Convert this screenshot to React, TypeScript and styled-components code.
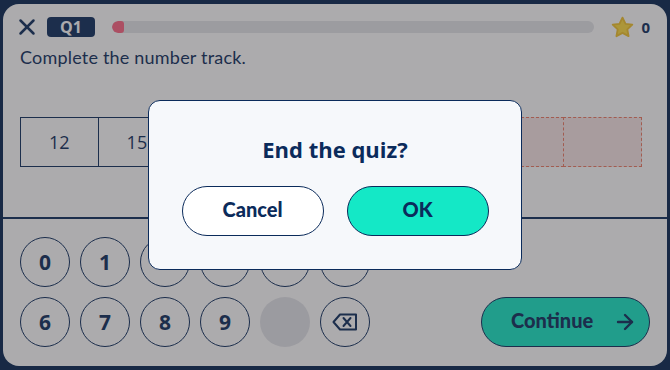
import React from "react";
import styled, { createGlobalStyle } from "styled-components";
import { X, ArrowRight } from "lucide-react";

const navy = "#0b2b5b";

const GlobalStyle = createGlobalStyle`
  html, body {
    margin: 0;
    padding: 0;
    width: 670px;
    height: 370px;
    overflow: hidden;
    background: #04234f;
  }
  * {
    box-sizing: border-box;
  }
`;

const Screen = styled.div`
  width: 670px;
  height: 370px;
  padding: 4px 3px;
  font-family: "Open Sans", "Noto Sans", sans-serif;
  color: ${navy};
`;

const Panel = styled.div`
  height: 362px;
  background: #ffffff;
  border-radius: 16px;
  display: flex;
  flex-direction: column;
  overflow: hidden;
`;

// top part
const Top = styled.div`
  height: 215px;
  padding: 13px 17px 0 17px;
  display: flex;
  flex-direction: column;
`;

const Header = styled.div`
  display: flex;
  align-items: center;
  height: 20px;
`;

const CloseBtn = styled.div`
  display: flex;
  align-items: center;
  justify-content: center;
  margin-left: -6px;
  margin-right: 7px;
  svg {
    flex-shrink: 0;
  }
`;

const Badge = styled.div`
  width: 48px;
  height: 20px;
  border-radius: 4px;
  background: ${navy};
  color: #ffffff;
  font-weight: 700;
  font-size: 16px;
  display: flex;
  align-items: center;
  justify-content: center;
  margin-right: 17px;
`;

const Track = styled.div`
  flex: 1;
  height: 12px;
  border-radius: 6px;
  background: #e4e5e9;
  overflow: hidden;
`;

const Fill = styled.div`
  height: 100%;
  background: #ff6482;
  border-radius: 6px 3px 3px 6px;
`;

const Score = styled.div`
  display: flex;
  align-items: center;
  margin-left: 16px;
  gap: 6px;
  font-weight: 700;
  font-size: 15px;
`;

const Prompt = styled.div`
  margin-top: 9px;
  font-family: "Lato", sans-serif;
  font-size: 18px;
  line-height: 22px;
  letter-spacing: 0.2px;
`;

const NumberTrack = styled.div`
  margin-top: 49px;
  display: flex;
`;

const Cell = styled.div<{ $empty?: boolean }>`
  width: 78.6px;
  height: 50px;
  display: flex;
  align-items: center;
  justify-content: center;
  font-size: 18px;
  background: ${(p) => (p.$empty ? "#f8e6e6" : "transparent")};
  border: 1px ${(p) => (p.$empty ? "dashed #ee7a62" : `solid ${navy}`)};
  & + & {
    margin-left: -1px;
  }
`;

// keypad
const Bottom = styled.div`
  flex: 1;
  border-top: 2px solid ${navy};
  padding: 18px 17px 19px 17px;
  display: flex;
  justify-content: space-between;
  align-items: flex-end;
`;

const Keypad = styled.div`
  display: grid;
  grid-template-columns: repeat(6, 50px);
  gap: 10px;
`;

const Key = styled.div<{ $blank?: boolean }>`
  width: 50px;
  height: 50px;
  border-radius: 50%;
  border: ${(p) => (p.$blank ? "none" : `1.5px solid ${navy}`)};
  background: ${(p) => (p.$blank ? "#e3e4e9" : "transparent")};
  display: flex;
  align-items: center;
  justify-content: center;
  font-weight: 700;
  font-size: 21px;
`;

const ContinueBtn = styled.div`
  width: 169px;
  height: 50px;
  border-radius: 25px;
  background: #14e8c6;
  border: 1.5px solid ${navy};
  display: flex;
  align-items: center;
  justify-content: space-between;
  padding: 0 12px 0 29px;
  font-family: "Lato", sans-serif;
  font-weight: 900;
  font-size: 20px;
  span {
    padding-bottom: 4px;
  }
`;

// modal
const Overlay = styled.div`
  position: fixed;
  inset: 0;
  background: rgba(54, 52, 57, 0.41);
  display: flex;
  align-items: center;
  justify-content: center;
`;

const Dialog = styled.div`
  width: 374px;
  height: 170px;
  background: #f6f8fb;
  border: 1.5px solid ${navy};
  border-radius: 12px;
  display: flex;
  flex-direction: column;
  align-items: center;
  padding-top: 33px;
`;

const DialogTitle = styled.div`
  font-weight: 700;
  font-size: 22px;
  line-height: 30px;
`;

const DialogActions = styled.div`
  display: flex;
  gap: 23px;
  margin-top: 22px;
`;

const DialogBtn = styled.div<{ $primary?: boolean }>`
  width: 142px;
  height: 50px;
  border-radius: 25px;
  border: 1.5px solid ${navy};
  background: ${(p) => (p.$primary ? "#14e8c6" : "#ffffff")};
  display: flex;
  align-items: center;
  justify-content: center;
  padding-bottom: 5px;
  font-family: "Lato", sans-serif;
  font-weight: 900;
  font-size: 20px;
`;

const Star = () => (
  <svg width="25" height="25" viewBox="0 0 24 24">
    <path
      d="M12 2.5l2.9 6 6.5.8-4.8 4.5 1.2 6.5L12 17.1l-5.8 3.2 1.2-6.5L2.6 9.3l6.5-.8z"
      fill="#ffdc3c"
      stroke="#f2c22a"
      strokeWidth="1.8"
      strokeLinejoin="round"
    />
  </svg>
);

const Backspace = () => (
  <svg width="28" height="20" viewBox="0 0 28 20" fill="none">
    <path
      d="M9 2.5H25V17.5H9L2.5 10Z"
      stroke={navy}
      strokeWidth="2"
      strokeLinejoin="round"
    />
    <path d="M12.5 6l7 8M19.5 6l-7 8" stroke={navy} strokeWidth="2" strokeLinecap="round" />
  </svg>
);

// cells 3-6 sit under the dialog
const cells = ["12", "15", " ", " ", " ", " ", "", ""];
const keys = ["0", "1", "2", "3", "4", "5", "6", "7", "8", "9"];

export default function App() {
  return (
    <>
      <GlobalStyle />
      <Screen>
        <Panel>
          <Top>
            <Header>
              <CloseBtn>
                <X size={26} strokeWidth={2.3} color={navy} />
              </CloseBtn>
              <Badge>Q1</Badge>
              <Track>
                <Fill style={{ width: `${(12 / 486) * 100}%` }} />
              </Track>
              <Score>
                <Star />
                <span>0</span>
              </Score>
            </Header>
            <Prompt>Complete the number track.</Prompt>
            <NumberTrack>
              {cells.map((c, i) => (
                <Cell key={i} $empty={c === ""}>
                  {c.trim()}
                </Cell>
              ))}
            </NumberTrack>
          </Top>
          <Bottom>
            <Keypad>
              {keys.map((k) => (
                <Key key={k}>{k}</Key>
              ))}
              <Key $blank />
              <Key>
                <Backspace />
              </Key>
            </Keypad>
            <ContinueBtn>
              <span>Continue</span>
              <ArrowRight size={24} strokeWidth={2.4} color={navy} />
            </ContinueBtn>
          </Bottom>
        </Panel>
        <Overlay>
          <Dialog>
            <DialogTitle>End the quiz?</DialogTitle>
            <DialogActions>
              <DialogBtn>Cancel</DialogBtn>
              <DialogBtn $primary>OK</DialogBtn>
            </DialogActions>
          </Dialog>
        </Overlay>
      </Screen>
    </>
  );
}
